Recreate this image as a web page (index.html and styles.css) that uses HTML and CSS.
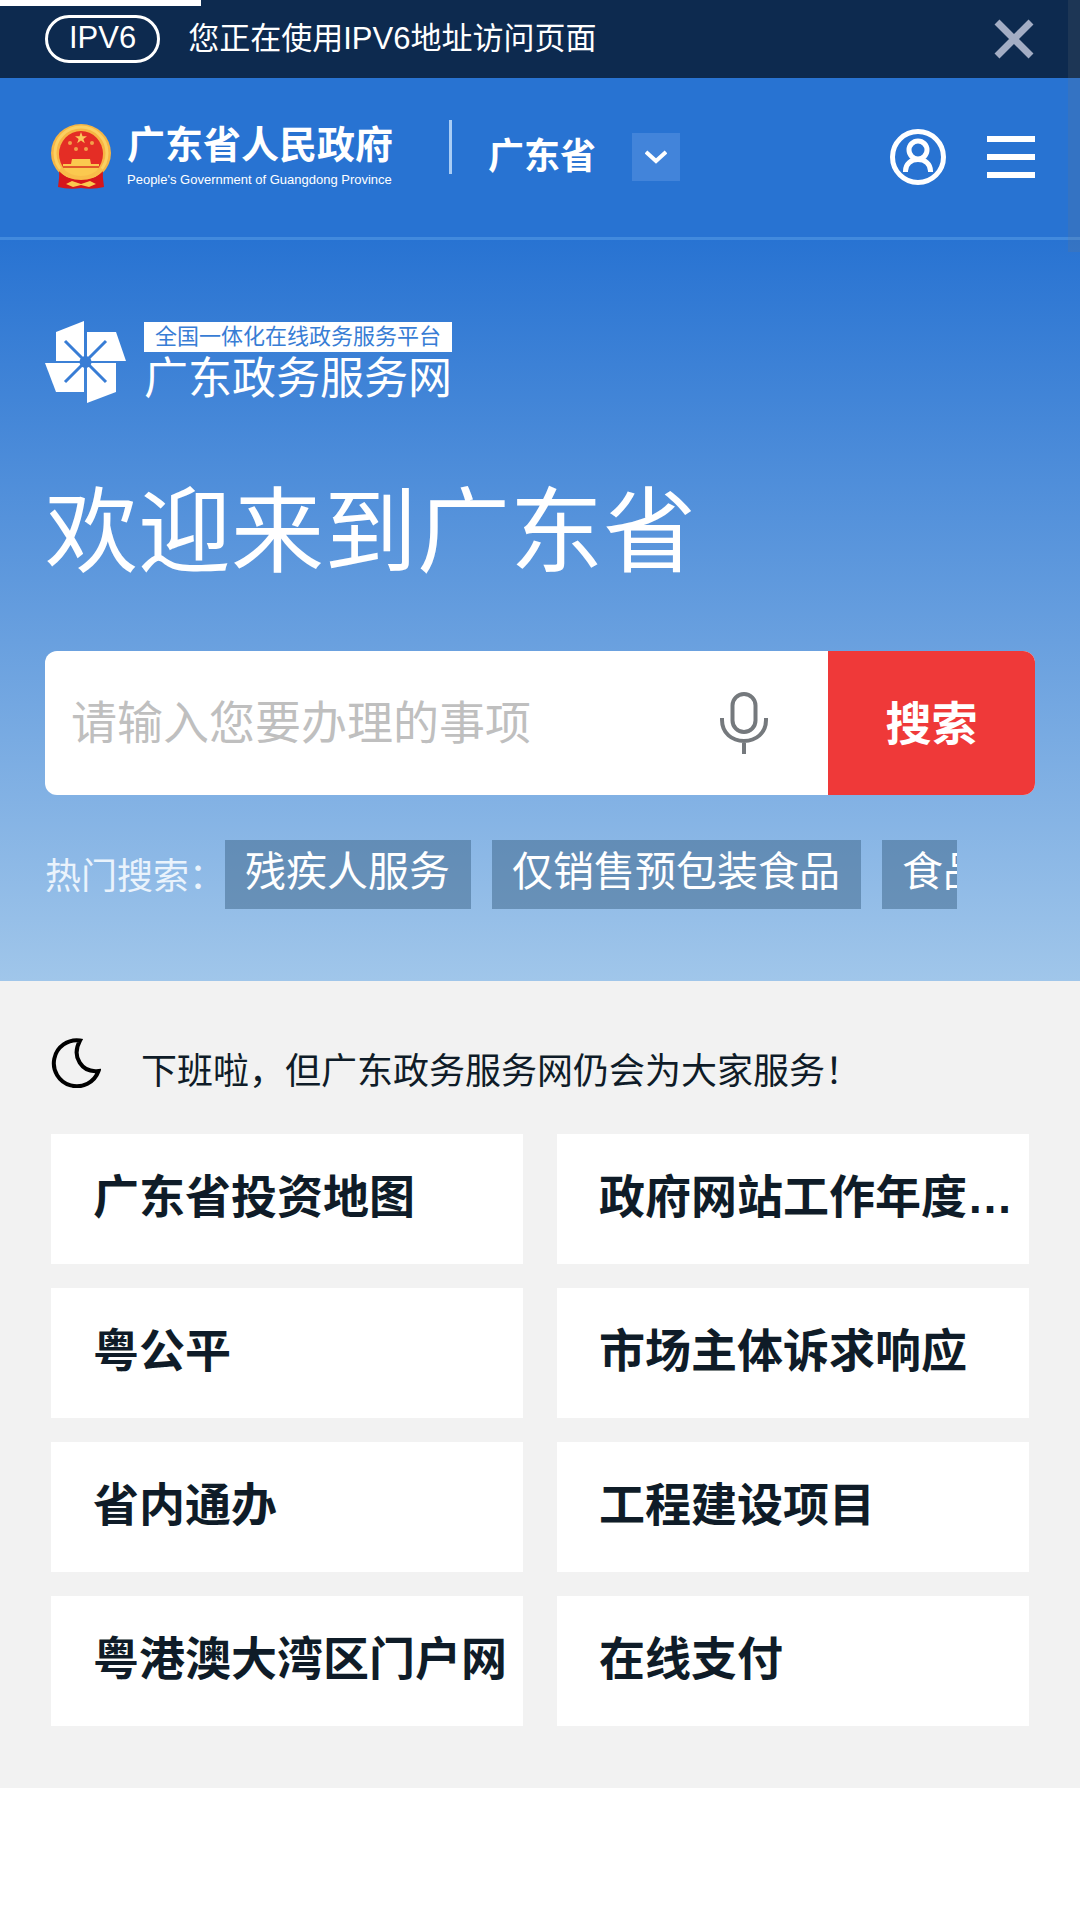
FILE: index.html
```html
<!DOCTYPE html>
<html lang="zh-CN">
<head>
  <meta charset="UTF-8" />
  <meta name="viewport" content="width=device-width, initial-scale=1.0"/>
  <title>广东政务服务网</title>
  <link rel="stylesheet" href="styles.css">
</head>
<body>

<div class="progress"></div>
<div class="scroll-thumb"></div>

<div class="ipv6-bar">
  <span class="ipv6-tag">IPV6</span>
  <span class="ipv6-text">您正在使用IPV6地址访问页面</span>
  <button class="icon-btn close-btn" type="button" aria-label="关闭">
    <svg width="42" height="42" viewBox="0 0 42 42" fill="none" stroke="#a3adc4" stroke-width="7">
      <path d="M4 4L38 38M38 4L4 38"/>
    </svg>
  </button>
</div>

<header class="header">
  <a class="gov-logo" href="#">
    <svg class="emblem" width="60" height="66" viewBox="0 0 60 66">
      <path d="M9 46L7 63Q18 66 30 64Q42 66 53 63L51 46Z" fill="#d5161c"/>
      <ellipse cx="30" cy="29" rx="30" ry="29" fill="#f6b544"/>
      <ellipse cx="30" cy="29" rx="26" ry="26" fill="none" stroke="#fbd062" stroke-width="3"/>
      <ellipse cx="30" cy="30" rx="22" ry="23" fill="#e42d25"/>
      <path d="M30 8l1.500 4.200h4.500l-3.600 2.700 1.400 4.300-3.800-2.600-3.800 2.600 1.400-4.300-3.600-2.700h4.500z" fill="#fbc85c"/>
      <g fill="#f3a04a">
        <circle cx="19" cy="19" r="2"/>
        <circle cx="41" cy="19" r="2"/>
        <circle cx="25" cy="25" r="2"/>
        <circle cx="35" cy="25" r="2"/>
      </g>
      <path d="M21 35h18l1 5h8v4q-5 9-18 10q-13-1-18-10v-4h8z" fill="#fbc94f"/>
      <path d="M12 43h36" stroke="#e0582b" stroke-width="2"/>
      <path d="M8 47q10 11 22 6q12 5 22-6l-1 13q-12 3-21 0q-9 3-21 0z" fill="#d5161c"/>
      <path d="M9 45q9 9 21 9t21-9" fill="none" stroke="#f8bd49" stroke-width="4"/>
      <path d="M15 60l6-3 9 3 9-3 6 3-7 3-8-2-8 2z" fill="#fbc94f"/>
    </svg>
    <span class="gov-name">
      <strong>广东省人民政府</strong>
      <small>People's Government of Guangdong Province</small>
    </span>
  </a>
  <span class="divider"></span>
  <span class="region">广东省</span>
  <button class="region-btn" type="button" aria-label="切换地区">
    <svg width="22" height="14" viewBox="0 0 22 14" fill="none" stroke="#fff" stroke-width="4">
      <path d="M1 2L11 11L21 2"/>
    </svg>
  </button>
  <div class="header-actions">
    <button class="icon-btn" type="button" aria-label="登录">
      <svg width="56" height="56" viewBox="0 0 56 56" fill="none" stroke="#fff" stroke-width="5">
        <circle cx="28" cy="28" r="25.500"/>
        <circle cx="28" cy="21" r="9"/>
        <path d="M15.500 43V42C15.500 35 21 30.500 28 30.500S40.500 35 40.500 42V43"/>
      </svg>
    </button>
    <button class="icon-btn" type="button" aria-label="菜单">
      <svg width="48" height="42" viewBox="0 0 48 42" fill="#fff">
        <path d="M0 0h48v6H0zM0 18h48v6H0zM0 36h48v6H0z"/>
      </svg>
    </button>
  </div>
</header>

<section class="hero">
  <a class="site-logo" href="#">
    <svg width="82" height="82" viewBox="0 0 82 82">
      <g fill="#fff">
        <path d="M11 11L39 0V40H11Z"/>
        <path d="M42 11H71L81 40H42Z"/>
        <path d="M0 42H39V71H11Z"/>
        <path d="M42 42H71V71L42 82Z"/>
      </g>
      <path d="M20 20L61 61M61 20L20 61" stroke="#387dd5" stroke-width="3"/>
      <circle cx="40.500" cy="41" r="6" fill="#387dd5"/>
    </svg>
    <span class="site-name">
      <span class="site-sub">全国一体化在线政务服务平台</span>
      <span class="site-title">广东政务服务网</span>
    </span>
  </a>

  <h1>欢迎来到广东省</h1>

  <form class="search">
    <input class="search-input" type="text" placeholder="请输入您要办理的事项" aria-label="请输入您要办理的事项">
    <button class="icon-btn mic-btn" type="button" aria-label="语音搜索">
      <svg width="48" height="64" viewBox="0 0 48 64" fill="none" stroke="#75797d" stroke-width="4">
        <rect x="12.500" y="3" width="23" height="38" rx="11.500"/>
        <path d="M2 27V29C2 42 12 50 24 50S46 42 46 29V27M24 50V63"/>
      </svg>
    </button>
    <button class="search-btn" type="submit">搜索</button>
  </form>

  <div class="hot">
    <span class="hot-label">热门搜索：</span>
    <div class="hot-list">
      <a href="#">残疾人服务</a>
      <a href="#">仅销售预包装食品</a>
      <a href="#">食品经营许可</a>
    </div>
  </div>
</section>

<main class="content">
  <div class="notice">
    <svg width="50" height="50" viewBox="0 0 50 50" fill="none" stroke="#000" stroke-width="4">
      <path d="M29 2.500A23 23 0 1 0 47.500 33C31 35 20 19 29 2.500Z"/>
    </svg>
    <p>下班啦，但广东政务服务网仍会为大家服务！</p>
  </div>

  <div class="cards">
    <a href="#">广东省投资地图</a>
    <a href="#">政府网站工作年度报表</a>
    <a href="#">粤公平</a>
    <a href="#">市场主体诉求响应</a>
    <a href="#">省内通办</a>
    <a href="#">工程建设项目</a>
    <a href="#">粤港澳大湾区门户网</a>
    <a href="#">在线支付</a>
  </div>
</main>

</body>
</html>
```
FILE: styles.css
```css
* {
  margin: 0;
  padding: 0;
  box-sizing: border-box;
}

body {
  font-family: "Liberation Sans", "Noto Sans CJK SC", sans-serif;
  background: #fff;
  color: #0f1c28;
}

a {
  color: inherit;
  text-decoration: none;
}

button {
  border: none;
  font-family: inherit;
  cursor: pointer;
}

svg {
  display: block;
  flex-shrink: 0;
}

.icon-btn {
  background: none;
}

/* page loading bar */
.progress {
  position: absolute;
  top: 0;
  left: 0;
  width: 201px;
  height: 6px;
  background: #fff;
}

.scroll-thumb {
  position: absolute;
  top: 0;
  right: 0;
  width: 12px;
  height: 252px;
  background: rgba(120, 120, 120, 0.16);
}

/* ipv6 bar */
.ipv6-bar {
  display: flex;
  align-items: center;
  height: 78px;
  padding: 0 45px;
  background: #0d2a4f;
  color: #fff;
  font-size: 31px;
}

.ipv6-tag {
  height: 48px;
  padding: 0 21px;
  border: 3px solid #fff;
  border-radius: 24px;
  line-height: 40px;
}

.ipv6-text {
  margin-left: 28px;
  line-height: 42px;
}

.close-btn {
  margin-left: auto;
}

/* header */
.header {
  display: flex;
  align-items: center;
  height: 162px;
  padding: 0 45px 2px 51px;
  background: #2873d2;
  border-bottom: 3px solid #428add;
  color: #fff;
}

.gov-logo {
  display: flex;
  align-items: center;
  gap: 16px;
}

.gov-name strong {
  display: block;
  font-size: 38px;
  line-height: 46px;
}

.gov-name small {
  display: block;
  font-size: 13px;
  line-height: 24px;
}

.divider {
  align-self: flex-start;
  width: 3px;
  height: 54px;
  margin: 42px 36px 0 56px;
  background: #a9cdf5;
}

.region {
  font-size: 36px;
  font-weight: bold;
  line-height: 54px;
}

.region-btn {
  display: flex;
  align-items: center;
  justify-content: center;
  width: 48px;
  height: 48px;
  margin-left: 36px;
  background: #4284da;
}

.header-actions {
  display: flex;
  align-items: center;
  gap: 41px;
  margin-left: auto;
}

/* hero */
.hero {
  padding: 81px 45px 72px;
  background: linear-gradient(#2873d2, #a0c6ea);
  color: #fff;
}

.site-logo {
  display: flex;
  align-items: center;
  gap: 17px;
}

.site-sub {
  display: block;
  padding: 0 11px;
  background: #fff;
  color: #387dd5;
  font-size: 22px;
  line-height: 30px;
}

.site-title {
  display: block;
  padding-top: 4px;
  font-size: 44px;
  line-height: 46px;
}

h1 {
  margin: 66px 0 54px;
  font-size: 93px;
  font-weight: normal;
  line-height: 128px;
}

.search {
  display: flex;
  height: 144px;
  background: #fff;
  border-radius: 12px;
  overflow: hidden;
}

.search-input {
  flex: 1;
  min-width: 0;
  padding-left: 26px;
  border: none;
  outline: none;
  background: none;
  font-family: inherit;
  font-size: 46px;
}

.search-input::placeholder {
  color: #bfbfbf;
}

.mic-btn {
  margin: 0 60px 0 20px;
}

.search-btn {
  width: 207px;
  padding-bottom: 6px;
  background: #ef3939;
  color: #fff;
  font-size: 46px;
  font-weight: bold;
}

.hot {
  display: flex;
  align-items: center;
  margin-top: 45px;
}

.hot-label {
  flex-shrink: 0;
  width: 180px;
  padding-bottom: 4px;
  font-size: 36px;
  color: #eaf3fc;
}

.hot-list {
  display: flex;
  flex: 1;
  gap: 21px;
  min-width: 0;
  margin-right: 78px;
  overflow: hidden;
}

.hot-list a {
  flex-shrink: 0;
  height: 69px;
  padding: 0 21px 0 20px;
  background: rgba(60, 100, 135, 0.5);
  font-size: 41px;
  line-height: 64px;
}

/* content */
.content {
  padding: 57px 51px 62px;
  background: #f2f2f2;
}

.notice {
  display: flex;
  gap: 40px;
}

.notice p {
  font-size: 36px;
  line-height: 68px;
}

.cards {
  display: grid;
  grid-template-columns: 1fr 1fr;
  gap: 24px 34px;
  margin-top: 28px;
}

.cards a {
  height: 130px;
  padding: 0 12px 0 42px;
  background: #fff;
  font-size: 46px;
  font-weight: bold;
  line-height: 126px;
  white-space: nowrap;
  overflow: hidden;
  text-overflow: ellipsis;
}

@media screen and (max-width: 900px) {
  .header {
    flex-wrap: wrap;
    height: auto;
  }

  .cards {
    grid-template-columns: 1fr;
  }
}
```
